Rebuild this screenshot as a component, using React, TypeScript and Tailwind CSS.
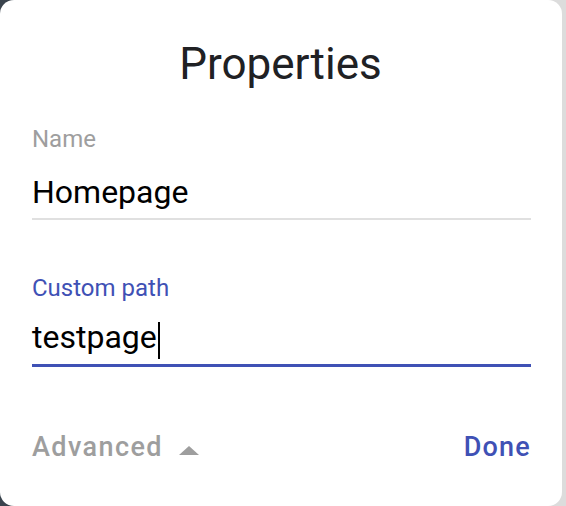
export default function App() {
  return (
    <div className="w-[566px] h-[506px] bg-[linear-gradient(to_right,#3a434d_0,#3a434d_14px,#dcdcdc_14px)]">
      <div
        className="w-[562px] h-[506px] bg-white rounded-[14px] px-[32px] flex flex-col"
        style={{ fontFamily: 'Roboto, "Liberation Sans", sans-serif' }}
      >
        <h1 className="text-center text-[44px] leading-none text-[#202124] mt-[42px] -ml-[1px]">Properties</h1>

        <div className="mt-[41px]">
          <div className="text-[24px] leading-none text-[#9e9e9e]">Name</div>
          <div className="mt-[25px] text-[32px] leading-none text-black pb-[10px] border-b-2 border-[#e0e0e0] w-[499px]">
            Homepage
          </div>
        </div>

        <div className="mt-[56px]">
          <div className="text-[24px] leading-none text-[#3f51b5]">Custom path</div>
          <div className="mt-[21px] pb-[11px] border-b-[3px] border-[#3f51b5] w-[499px] flex items-end">
            <span className="text-[32px] leading-none text-black">testpage</span>
            <span className="w-[2px] h-[37px] bg-black -mb-[6px] ml-[1px]" />
          </div>
        </div>

        <div className="mt-[67px] flex items-start justify-between w-[499px]">
          <div className="flex items-start gap-[16px]">
            <span className="text-[27px] leading-none font-medium tracking-[1.4px] text-[#9e9e9e]">Advanced</span>
            <svg width="20" height="9" viewBox="0 0 20 9" className="mt-[12px]">
              <polygon points="0,9 10,0 20,9" fill="#9e9e9e" />
            </svg>
          </div>
          <span className="text-[27px] leading-none font-medium tracking-[1.2px] text-[#3f51b5]">Done</span>
        </div>
      </div>
    </div>
  );
}
